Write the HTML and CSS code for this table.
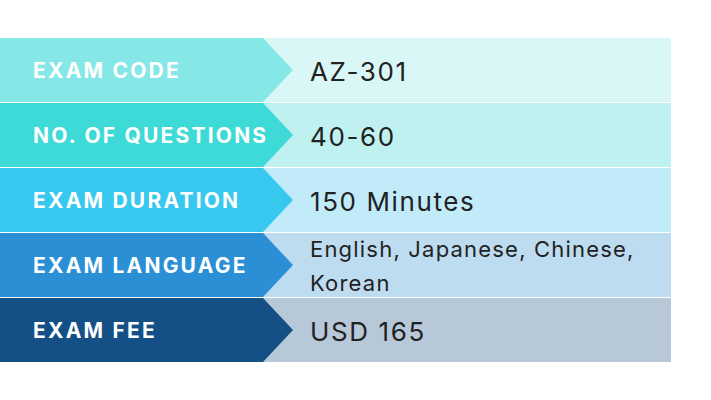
FILE: index.html
```html
<!DOCTYPE html>
<html lang="en">
<head>
<meta charset="utf-8">
<title>AZ-301 Exam Details</title>
<link rel="stylesheet" href="styles.css">
</head>
<body>
<div class="table">
  <div class="row r1">
    <div class="label">EXAM CODE</div>
    <div class="value">AZ-301</div>
  </div>
  <div class="row r2">
    <div class="label">NO. OF QUESTIONS</div>
    <div class="value">40-60</div>
  </div>
  <div class="row r3">
    <div class="label">EXAM DURATION</div>
    <div class="value">150 Minutes</div>
  </div>
  <div class="row r4">
    <div class="label">EXAM LANGUAGE</div>
    <div class="value small">English, Japanese, Chinese,<br>Korean</div>
  </div>
  <div class="row r5">
    <div class="label">EXAM FEE</div>
    <div class="value">USD 165</div>
  </div>
</div>
</body>
</html>
```

FILE: styles.css
```css
html, body {
  margin: 0;
  padding: 0;
  background: #ffffff;
}
body {
  width: 711px;
  height: 400px;
  overflow: hidden;
}
.table {
  margin-top: 38px;
  width: 671px;
  display: flex;
  flex-direction: column;
  gap: 1px;
}
.row {
  display: flex;
  height: 64px;
}
.label {
  position: relative;
  z-index: 1;
  flex: 0 0 293px;
  margin-right: -30px;
  clip-path: polygon(0 0, 263px 0, 100% 50%, 263px 100%, 0 100%);
  display: flex;
  align-items: center;
  padding-left: 33px;
  padding-top: 1px;
  box-sizing: border-box;
  color: #ffffff;
  font-family: "Inter", "Liberation Sans", sans-serif;
  font-weight: 700;
  font-size: 21px;
  letter-spacing: 2.2px;
  white-space: nowrap;
}
.value {
  flex: 1;
  display: flex;
  align-items: center;
  padding-left: 47px;
  padding-top: 3px;
  color: #222222;
  font-family: "Inter", "Liberation Sans", sans-serif;
  font-size: 26px;
  letter-spacing: 1.6px;
}
.value.small {
  font-size: 22px;
  line-height: 34px;
  letter-spacing: 1.2px;
  padding-top: 1px;
}
.r1 .label { background: #86e8e6; }
.r1 .value { background: #d9f7f7; }
.r2 .label { background: #3ddad7; }
.r2 .value { background: #c0f1f1; }
.r3 .label { background: #36c8ef; }
.r3 .value { background: #c1ebf9; }
.r4 .label { background: #2b8fd6; }
.r4 .value { background: #bedcf0; }
.r5 .label { background: #145086; }
.r5 .value { background: #b7c9d9; }
```
